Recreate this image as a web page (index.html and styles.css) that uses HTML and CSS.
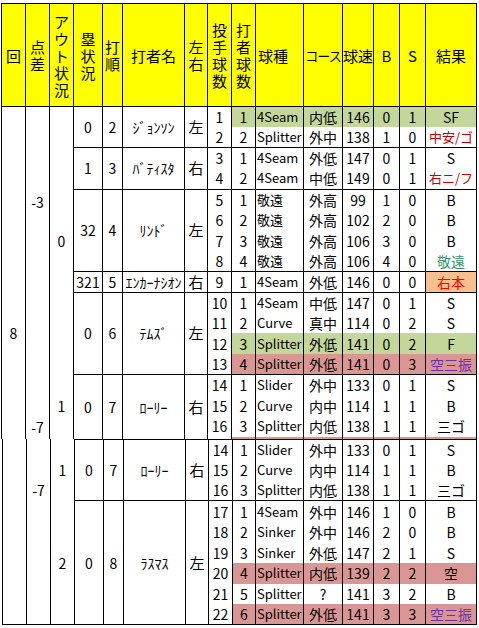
FILE: index.html
```html
<!DOCTYPE html>
<html lang="ja">
<head>
<meta charset="utf-8">
<link rel="stylesheet" href="styles.css">
</head>
<body>
<table class="sheet upper">
<colgroup>
<col class="w24"><col class="w24"><col class="w24"><col class="w29"><col class="w20"><col class="w62"><col class="w23"><col class="w24"><col class="w24"><col class="w48"><col class="w39"><col class="w31"><col class="w26"><col class="w26"><col class="w51">
</colgroup>
<thead>
<tr class="hd">
<th>回</th><th>点差</th><th>アウト状況</th><th>塁状況</th><th>打順</th><th class="one">打者名</th><th>左右</th><th>投手球数</th><th>打者球数</th><th class="one lft">球種</th><th class="one tight">コース</th><th class="one">球速</th><th class="one">B</th><th class="one">S</th><th class="one">結果</th>
</tr>
</thead>
<tbody>
<tr class="first g">
<td class="m inn" rowspan="17">8</td>
<td class="m d1" rowspan="9">-3</td>
<td class="m mid" rowspan="13">0</td>
<td class="ab" rowspan="2">0</td><td class="ab" rowspan="2">2</td><td class="ab nm" rowspan="2">ｼﾞｮﾝｿﾝ</td><td class="ab lr" rowspan="2">左</td>
<td class="n">1</td><td class="p">1</td><td class="p k">4Seam</td><td class="p">内低</td><td class="p">146</td><td class="p">0</td><td class="p">1</td><td class="p">SF</td>
</tr>
<tr>
<td class="n">2</td><td class="p">2</td><td class="p k">Splitter</td><td class="p">外中</td><td class="p">138</td><td class="p">1</td><td class="p">0</td><td class="p red sm">中安/ゴ</td>
</tr>
<tr class="first">
<td class="ab" rowspan="2">1</td><td class="ab" rowspan="2">3</td><td class="ab nm" rowspan="2">ﾊﾞﾃｨｽﾀ</td><td class="ab lr" rowspan="2">右</td>
<td class="n">3</td><td class="p">1</td><td class="p k">4Seam</td><td class="p">外低</td><td class="p">147</td><td class="p">0</td><td class="p">1</td><td class="p">S</td>
</tr>
<tr>
<td class="n">4</td><td class="p">2</td><td class="p k">4Seam</td><td class="p">中低</td><td class="p">149</td><td class="p">0</td><td class="p">1</td><td class="p red sm">右ニ/フ</td>
</tr>
<tr class="first">
<td class="ab" rowspan="4">32</td><td class="ab" rowspan="4">4</td><td class="ab nm" rowspan="4">ﾘﾝﾄﾞ</td><td class="ab lr" rowspan="4">左</td>
<td class="n">5</td><td class="p">1</td><td class="p k">敬遠</td><td class="p">外高</td><td class="p">99</td><td class="p">1</td><td class="p">0</td><td class="p">B</td>
</tr>
<tr>
<td class="n">6</td><td class="p">2</td><td class="p k">敬遠</td><td class="p">外高</td><td class="p">102</td><td class="p">2</td><td class="p">0</td><td class="p">B</td>
</tr>
<tr>
<td class="n">7</td><td class="p">3</td><td class="p k">敬遠</td><td class="p">外高</td><td class="p">106</td><td class="p">3</td><td class="p">0</td><td class="p">B</td>
</tr>
<tr>
<td class="n">8</td><td class="p">4</td><td class="p k">敬遠</td><td class="p">外高</td><td class="p">106</td><td class="p">4</td><td class="p">0</td><td class="p grn">敬遠</td>
</tr>
<tr class="first">
<td class="ab">321</td><td class="ab">5</td><td class="ab nm">ｴﾝｶｰﾅｼｵﾝ</td><td class="ab lr">右</td>
<td class="n">9</td><td class="p">1</td><td class="p k">4Seam</td><td class="p">外低</td><td class="p">146</td><td class="p">0</td><td class="p">0</td><td class="p hr">右本</td>
</tr>
<tr class="first">
<td class="m d2" rowspan="8">-7</td>
<td class="ab" rowspan="4">0</td><td class="ab" rowspan="4">6</td><td class="ab nm" rowspan="4">ﾃﾑｽﾞ</td><td class="ab lr" rowspan="4">左</td>
<td class="n">10</td><td class="p">1</td><td class="p k">4Seam</td><td class="p">中低</td><td class="p">147</td><td class="p">0</td><td class="p">1</td><td class="p">S</td>
</tr>
<tr>
<td class="n">11</td><td class="p">2</td><td class="p k">Curve</td><td class="p">真中</td><td class="p">114</td><td class="p">0</td><td class="p">2</td><td class="p">S</td>
</tr>
<tr class="g">
<td class="n">12</td><td class="p">3</td><td class="p k">Splitter</td><td class="p">外低</td><td class="p">141</td><td class="p">0</td><td class="p">2</td><td class="p">F</td>
</tr>
<tr class="pk">
<td class="n">13</td><td class="p">4</td><td class="p k">Splitter</td><td class="p">外低</td><td class="p">141</td><td class="p">0</td><td class="p">3</td><td class="p pur">空三振</td>
</tr>
<tr class="first">
<td class="m o1" rowspan="4">1</td>
<td class="ab" rowspan="4">0</td><td class="ab" rowspan="4">7</td><td class="ab nm" rowspan="4">ﾛｰﾘｰ</td><td class="ab lr" rowspan="4">右</td>
<td class="n">14</td><td class="p">1</td><td class="p k">Slider</td><td class="p">外中</td><td class="p">133</td><td class="p">0</td><td class="p">1</td><td class="p">S</td>
</tr>
<tr>
<td class="n">15</td><td class="p">2</td><td class="p k">Curve</td><td class="p">内中</td><td class="p">114</td><td class="p">1</td><td class="p">1</td><td class="p">B</td>
</tr>
<tr>
<td class="n">16</td><td class="p">3</td><td class="p k">Splitter</td><td class="p">内低</td><td class="p">138</td><td class="p">1</td><td class="p">1</td><td class="p">三ゴ</td>
</tr>
<tr class="strip pk">
<td class="n"></td><td class="p"></td><td class="p"></td><td class="p"></td><td class="p"></td><td class="p"></td><td class="p"></td><td class="p"></td>
</tr>
</tbody>
</table>
<table class="sheet lower">
<colgroup>
<col class="w24"><col class="w24"><col class="w24"><col class="w29"><col class="w20"><col class="w62"><col class="w23"><col class="w24"><col class="w23"><col class="w48"><col class="w39"><col class="w31"><col class="w26"><col class="w26"><col class="w51">
</colgroup>
<tbody>
<tr class="first">
<td class="m" rowspan="9"></td>
<td class="m d3" rowspan="9">-7</td>
<td class="m mid" rowspan="3">1</td>
<td class="ab" rowspan="3">0</td><td class="ab" rowspan="3">7</td><td class="ab nm" rowspan="3">ﾛｰﾘｰ</td><td class="ab lr" rowspan="3">右</td>
<td class="n">14</td><td class="p">1</td><td class="p k">Slider</td><td class="p">外中</td><td class="p">133</td><td class="p">0</td><td class="p">1</td><td class="p">S</td>
</tr>
<tr>
<td class="n">15</td><td class="p">2</td><td class="p k">Curve</td><td class="p">内中</td><td class="p">114</td><td class="p">1</td><td class="p">1</td><td class="p">B</td>
</tr>
<tr>
<td class="n">16</td><td class="p">3</td><td class="p k">Splitter</td><td class="p">内低</td><td class="p">138</td><td class="p">1</td><td class="p">1</td><td class="p">三ゴ</td>
</tr>
<tr class="first">
<td class="m mid" rowspan="6">2</td>
<td class="ab" rowspan="6">0</td><td class="ab" rowspan="6">8</td><td class="ab nm" rowspan="6">ﾗｽﾏｽ</td><td class="ab lr" rowspan="6">左</td>
<td class="n">17</td><td class="p">1</td><td class="p k">4Seam</td><td class="p">外中</td><td class="p">146</td><td class="p">1</td><td class="p">0</td><td class="p">B</td>
</tr>
<tr>
<td class="n">18</td><td class="p">2</td><td class="p k">Sinker</td><td class="p">外中</td><td class="p">146</td><td class="p">2</td><td class="p">0</td><td class="p">B</td>
</tr>
<tr>
<td class="n">19</td><td class="p">3</td><td class="p k">Sinker</td><td class="p">外低</td><td class="p">147</td><td class="p">2</td><td class="p">1</td><td class="p">S</td>
</tr>
<tr class="pk">
<td class="n">20</td><td class="p">4</td><td class="p k">Splitter</td><td class="p">内低</td><td class="p">139</td><td class="p">2</td><td class="p">2</td><td class="p">空</td>
</tr>
<tr>
<td class="n">21</td><td class="p">5</td><td class="p k">Splitter</td><td class="p">?</td><td class="p">141</td><td class="p">3</td><td class="p">2</td><td class="p">B</td>
</tr>
<tr class="pk">
<td class="n">22</td><td class="p">6</td><td class="p k">Splitter</td><td class="p">外低</td><td class="p">141</td><td class="p">3</td><td class="p">3</td><td class="p pur">空三振</td>
</tr>
</tbody>
</table>
</body>
</html>
```
FILE: styles.css
```css
html, body {
  margin: 0;
  padding: 0;
  background: #fff;
}
body {
  font-family: "Noto Sans CJK JP", "Noto Sans", sans-serif;
  color: #000;
}
.sheet {
  border-collapse: collapse;
  table-layout: fixed;
}
.upper {
  width: 475px;
  margin: 3px 0 0 1px;
}
.lower {
  width: 474px;
  margin: 0 0 0 2px;
  border-bottom: 1px solid #000;
}
.w20 { width: 20px; }
.w23 { width: 23px; }
.w24 { width: 24px; }
.w26 { width: 26px; }
.w29 { width: 29px; }
.w31 { width: 31px; }
.w39 { width: 39px; }
.w48 { width: 48px; }
.w51 { width: 51px; }
.w62 { width: 62px; }

.hd { height: 103px; }
th {
  background: #ffff00;
  border: 1px solid #000;
  font-weight: normal;
  font-size: 15px;
  line-height: 17px;
  padding: 0;
  text-align: center;
  vertical-align: middle;
  word-break: break-all;
}
th.one { white-space: nowrap; }
th.lft { text-align: left; padding-left: 2px; }
th.tight { letter-spacing: -1px; font-size: 13px; }

tbody tr { height: 20.625px; }
.lower tbody tr { height: 20.67px; }
td {
  border-left: 1px solid #000;
  border-right: 1px solid #000;
  border-top: none;
  border-bottom: none;
  padding: 0;
  font-size: 14px;
  line-height: 18px;
  text-align: center;
  vertical-align: middle;
  white-space: nowrap;
  overflow: hidden;
}
tr.first td { border-top: 1px solid #000; }
tr.first td.m { border-top: none; }
td.m { border-top: none; border-bottom: none; }
td.ab { border-top: 1px solid #000; }
td.nm { font-size: 14px; }
td.lr { font-size: 15px; }
td.k { text-align: left; padding-left: 1px; font-size: 13px; }
td.sm { font-size: 13px; }

td.inn { vertical-align: top; padding-top: 217px; }
td.d1 { vertical-align: top; padding-top: 86px; }
td.d2 { vertical-align: top; padding-top: 126px; }
td.d3 { vertical-align: top; padding-top: 42px; }
td.o1 { vertical-align: top; padding-top: 22px; }

tr.g td.p { background: #c4d79b; }
tr.pk td.p { background: #da9694; }
td.hr { background: #fabf8f; color: #ff0000; }
.red { color: #c00000; }
.grn { color: #339966; }
.pur { color: #7030a0; }

tr.strip { height: 2px; }
tr.strip td { height: 2px; line-height: 0; font-size: 0; }
```
